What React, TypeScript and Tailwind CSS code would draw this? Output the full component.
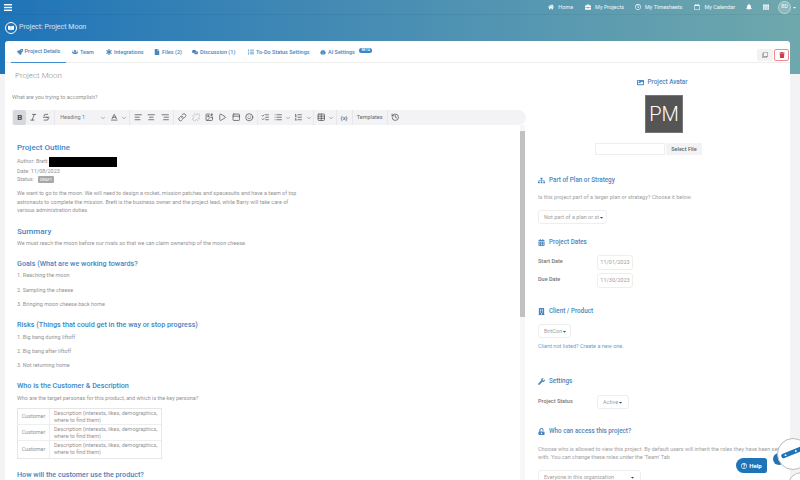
import React from 'react';
import {
  AlignCenter, AlignLeft, AlignRight, Baseline, ChevronDown, History, Italic, Link, List, ListChecks,
  ListOrdered, Play, Smile, Strikethrough, Table, Unlink, ImagePlus, PanelTop,
} from 'lucide-react';
import {
  FaBell, FaBookOpen, FaBriefcase, FaBuilding, FaCalendarAlt, FaCaretDown, FaComments, FaFile, FaImage, FaRegCalendar,
  FaRegClock, FaRegClone, FaRegQuestionCircle, FaHome, FaRobot, FaRocket, FaSitemap, FaStarOfLife, FaTh, FaTrash,
  FaUnlockAlt, FaUsers, FaWrench, FaListUl,
} from 'react-icons/fa';

const navItems = [
  { label: 'Home', icon: FaHome, cls: 'mr-[12px]' },
  { label: 'My Projects', icon: FaBriefcase, cls: 'mr-[11px]' },
  { label: 'My Timesheets', icon: FaRegClock, cls: 'mr-[12px]' },
  { label: 'My Calendar', icon: FaRegCalendar, cls: 'mr-[11px]' },
];

const tabs = [
  { label: 'Project Details', icon: FaRocket, active: true, cls: 'w-[55px] justify-center' },
  { label: 'Team', icon: FaUsers, cls: 'ml-[6px] w-[23px]' },
  { label: 'Integrations', icon: FaStarOfLife, cls: 'ml-[11px] w-[37px]' },
  { label: 'Files (2)', icon: FaFile, cls: 'ml-[11px] w-[27px]' },
  { label: 'Discussion (1)', icon: FaComments, cls: 'ml-[11px] w-[45px]' },
  { label: 'To-Do Status Settings', icon: FaListUl, cls: 'ml-[11px] w-[61px]' },
  { label: 'AI Settings', icon: FaRobot, beta: true, cls: 'ml-[11px] w-[37px]' },
];

const Sep = ({ className = '' }: { className?: string }) => <span className={`h-[15px] w-px shrink-0 bg-[#e6e7ea] ${className}`} />;

const ToolBtn = ({ icon: Icon, active, faded }: { icon: React.ElementType; active?: boolean; faded?: boolean }) => (
  <span className={`flex h-[15px] w-[13.4px] shrink-0 items-center justify-center rounded-[2px] ${active ? 'bg-[#d5d8dc]' : ''}`}>
    <Icon size={8.5} strokeWidth={2} className={faded ? 'text-[#b5b5b5]' : 'text-[#484848]'} />
  </span>
);

const Caret = () => (
  <span className="flex w-[7px] shrink-0 justify-center">
    <ChevronDown size={6} className="text-[#666]" />
  </span>
);

const SelectCaret = () => <FaCaretDown size={5} className="shrink-0 text-[#444]" />;

const SectionTitle = ({ icon: Icon, children, className = '' }: { icon: React.ElementType; children: React.ReactNode; className?: string }) => (
  <div className={`flex items-center gap-[4px] text-[6.3px] font-medium leading-[8px] text-[#4a86bd] ${className}`}>
    <Icon size={7} />
    {children}
  </div>
);

const Heading = ({ children, className = '' }: { children: React.ReactNode; className?: string }) => (
  <h3 className={`text-[7.2px] font-medium leading-[11px] text-[#4186c4] ${className}`}>{children}</h3>
);

const Field = ({ children, className = '' }: { children: React.ReactNode; className?: string }) => (
  <div className={`flex items-center overflow-hidden whitespace-nowrap rounded-[3px] border border-[#eeeeee] bg-white text-[5.5px] text-[#a0a0a0] ${className}`}>
    {children}
  </div>
);

const Label = ({ children }: { children: React.ReactNode }) => (
  <span className="w-[59px] pt-[2px] text-[5.5px] font-medium leading-[8px] text-[#777]">{children}</span>
);

export default function App() {
  return (
    <div className="relative h-[480px] w-[800px] overflow-hidden bg-[#f3f3f5] font-['Roboto',sans-serif] text-[#888]">
      <div className="h-[74px] bg-gradient-to-r from-[#1e74b8] to-[#6fa8ac]">
        <div className="flex h-[15px] items-center justify-between border-b border-black/5 pl-[4px] pr-[3px] text-white">
          <svg width="8" height="7" viewBox="0 0 8 7" className="fill-white">
            <rect width="8" height="1.4" />
            <rect y="2.8" width="8" height="1.4" />
            <rect y="5.6" width="8" height="1.4" />
          </svg>
          <div className="flex items-center text-[5.5px] text-white/90">
            {navItems.map(({ label, icon: Icon, cls }) => (
              <span key={label} className={`flex items-center gap-[4px] ${cls}`}>
                <Icon size={6} className="text-white" />
                {label}
              </span>
            ))}
            <FaBell size={6} className="mr-[11px] text-white" />
            <FaTh size={6} className="mr-[9px] text-white" />
            <span className="flex h-[13px] w-[13px] items-center justify-center rounded-full border border-white/40 bg-white/20 text-[5px]">BD</span>
            <FaCaretDown size={5} className="ml-[1px]" />
          </div>
        </div>
        <div className="flex h-[25px] items-center gap-[2px] pl-[5px] text-[7px] text-white/80">
          <span className="flex h-[12px] w-[12px] items-center justify-center rounded-full border border-white text-white">
            <FaBookOpen size={6} />
          </span>
          Project: Project Moon
        </div>
      </div>

      <div className="relative ml-[5px] -mt-[33px] h-[439px] w-[785px] rounded-t-[3px] bg-white">
        <div className="flex h-[22px] items-start justify-between border-b border-[#eeeeee] pl-[6px] pr-[1px]">
          <div className="flex text-[5.5px] font-medium text-[#4a86bd]">
            {tabs.map(({ label, icon: Icon, active, beta, cls }) => (
              <span key={label} className={`relative flex h-[22px] items-center gap-[2px] whitespace-nowrap ${cls} ${active ? 'border-b border-[#3f8fd0]' : ''}`}>
                <Icon size={6} className="shrink-0" />
                {label}
                {beta && <span className="absolute -right-[15px] top-[7px] rounded-[3px] bg-[#2f86cc] px-[2px] text-[3.5px] leading-[5px] text-white">BETA</span>}
              </span>
            ))}
          </div>
          <div className="mt-[8px] flex items-center gap-[1px]">
            <span className="flex h-[12px] w-[16px] items-center justify-center rounded-[2px] bg-[#f2f2f2]"><FaRegClone size={6} className="text-[#888]" /></span>
            <span className="flex h-[12px] w-[15px] items-center justify-center rounded-[2px] border border-[#f08a90]"><FaTrash size={6} className="text-[#c9404d]" /></span>
          </div>
        </div>

        <div className="flex">
          <div className="w-[520px] pl-[7px]">
            <div className="mt-[7px] pl-[3px] text-[8px] font-light leading-[12px] text-[#8f8f8f]">Project Moon</div>
            <p className="mt-[11px] text-[5.5px] leading-[8px] text-[#939393]">What are you trying to accomplish?</p>
            <div className="mt-[9px] flex h-[15px] w-[514px] items-center rounded-r-[8px] bg-[#f3f3f5] pl-[1px]">
              <span className="flex h-[15px] w-[13.4px] shrink-0 items-center justify-center rounded-[2px] bg-[#d5d8dc] text-[8px] font-bold text-[#484848]">B</span>
              <ToolBtn icon={Italic} />
              <ToolBtn icon={Strikethrough} />
              <Sep className="ml-[1px]" />
              <span className="flex w-[52px] shrink-0 items-center justify-between pl-[5px] pr-[1px] text-[5.5px] text-[#777]">Heading 1<Caret /></span>
              <ToolBtn icon={Baseline} />
              <Caret />
              <Sep className="ml-[1px]" />
              <span className="w-[2px] shrink-0" />
              <ToolBtn icon={AlignLeft} />
              <ToolBtn icon={AlignCenter} />
              <ToolBtn icon={AlignRight} />
              <Sep className="ml-[1px]" />
              <span className="w-[2px] shrink-0" />
              <ToolBtn icon={Link} />
              <ToolBtn icon={Unlink} faded />
              <ToolBtn icon={ImagePlus} />
              <ToolBtn icon={Play} />
              <ToolBtn icon={PanelTop} />
              <ToolBtn icon={Smile} />
              <Sep className="ml-[1px]" />
              <ToolBtn icon={ListChecks} />
              <ToolBtn icon={List} />
              <Caret />
              <ToolBtn icon={ListOrdered} />
              <Caret />
              <Sep className="ml-[1px]" />
              <ToolBtn icon={Table} />
              <Caret />
              <Sep className="ml-[1px]" />
              <span className="w-[15px] shrink-0 text-center text-[6px] text-[#555]">{'{x}'}</span>
              <Sep />
              <span className="w-[34px] shrink-0 text-center text-[5.5px] text-[#666]">Templates</span>
              <Sep className="mr-[1px]" />
              <ToolBtn icon={History} />
            </div>

            <div className="flex h-[355px] w-[513px] overflow-hidden">
              <div className="min-w-0 flex-1 pl-[5px] pt-[16.5px] text-[5.45px] leading-[8.5px] text-[#939393]">
                <Heading className="!text-[8px] mb-[4px]">Project Outline</Heading>
                <div className="flex items-center">Author: Brett&nbsp;<span className="h-[10px] w-[68px] bg-black" /></div>
                <div>Date: 11/08/2023</div>
                <div className="flex items-center">Status: <span className="ml-[4px] rounded-[1px] bg-[#a8a8a8] px-[2px] text-[4px] leading-[7px] text-white">DRAFT</span></div>
                <p className="mt-[5.5px]">
                  We want to go to the moon. We will need to design a rocket, mission patches and spacesuits and have a team of top<br />
                  astronauts to complete the mission. Brett is the business owner and the project lead, while Barry will take care of<br />
                  various administration duties.
                </p>
                <Heading className="!text-[8px] mt-[11px]">Summary</Heading>
                <p className="mt-[2px]">We must reach the moon before our rivals so that we can claim ownership of the moon cheese.</p>
                <Heading className="mt-[11px]">Goals (What are we working towards?</Heading>
                <p className="mt-[2px]">1. Reaching the moon</p>
                <p className="mt-[6px]">2. Sampling the cheese</p>
                <p className="mt-[5.5px]">3. Bringing moon cheese back home</p>
                <Heading className="mt-[11px]">Risks (Things that could get in the way or stop progress)</Heading>
                <p className="mt-[3px]">1. Big bang during liftoff</p>
                <p className="mt-[5.5px]">2. Big bang after liftoff</p>
                <p className="mt-[5.5px]">3. Not returning home</p>
                <Heading className="mt-[10px]">Who is the Customer &amp; Description</Heading>
                <p className="mt-[3px]">Who are the target personas for this product, and which is the key persona?</p>
                <div className="mt-[6px] w-[145px] border border-[#e6e6e6]">
                  {[0, 1, 2].map((i) => (
                    <div key={i} className="flex h-[16.2px] items-center border-b border-[#eee] leading-[7px] last:border-b-0">
                      <span className="flex h-full w-[32px] items-center justify-center border-r border-[#eee]">Customer</span>
                      <span className="pl-[4px]">Description (interests, likes, demographics,<br />where to find them)</span>
                    </div>
                  ))}
                </div>
                <Heading className="mt-[10.5px]">How will the customer use the product?</Heading>
              </div>
              <div className="w-[5px] bg-[#f7f7f7]">
                <div className="mt-[6px] h-[186px] bg-[#c1c1c1]" />
              </div>
            </div>
          </div>

          <div className="h-[417px] w-[265px] overflow-hidden pl-[13px]">
            <div className="flex flex-col items-center">
              <SectionTitle icon={FaImage} className="mt-[15px] mr-[4px]">Project Avatar</SectionTitle>
              <div className="mt-[9px] flex h-[38px] w-[38px] items-center justify-center border border-[#777] bg-[#555] text-[20px] font-light leading-none text-white">PM</div>
              <div className="mt-[10px] flex items-center gap-[1px] self-start pl-[57px]">
                <div className="h-[12px] w-[70px] border border-[#eee] bg-white" />
                <span className="flex h-[12px] w-[36px] items-center justify-center bg-[#f3f3f5] text-[5.5px] font-medium text-[#666]">Select File</span>
              </div>
            </div>
            <SectionTitle icon={FaSitemap} className="mt-[21px]">Part of Plan or Strategy</SectionTitle>
            <p className="mt-[9px] text-[5.5px] leading-[8px] text-[#a0a0a0]">Is this project part of a larger plan or strategy? Choose it below.</p>
            <Field className="mt-[9px] h-[14px] w-[69px] justify-between px-[5px]">Not part of a plan or st<SelectCaret /></Field>
            <SectionTitle icon={FaCalendarAlt} className="mt-[14px]">Project Dates</SectionTitle>
            <div className="mt-[9px] flex items-start">
              <Label>Start Date</Label>
              <Field className="h-[15px] w-[36px] justify-center">11/01/2023</Field>
            </div>
            <div className="mt-[3px] flex items-start">
              <Label>Due Date</Label>
              <Field className="h-[15px] w-[36px] justify-center">11/30/2023</Field>
            </div>
            <SectionTitle icon={FaBuilding} className="mt-[19px]">Client / Product</SectionTitle>
            <Field className="mt-[9px] h-[14px] w-[33px] justify-between px-[5px]">BritCon<SelectCaret /></Field>
            <p className="mt-[4px] text-[5.5px] leading-[8px] text-[#6a9fd0]">Client not listed? Create a new one.</p>
            <SectionTitle icon={FaWrench} className="mt-[27px]">Settings</SectionTitle>
            <div className="mt-[10px] flex items-start">
              <Label>Project Status</Label>
              <Field className="h-[14px] w-[32px] justify-between px-[5px]">Active<SelectCaret /></Field>
            </div>
            <SectionTitle icon={FaUnlockAlt} className="mt-[18px]">Who can access this project?</SectionTitle>
            <p className="mt-[9.75px] text-[5.5px] leading-[8.5px] text-[#a0a0a0]">
              Choose who is allowed to view this project. By default users will inherit the roles they have been set<br />
              with. You can change these roles under the 'Team' Tab
            </p>
            <Field className="mt-[8.25px] h-[14px] w-[103px] justify-between px-[5px]">Everyone in this organization<SelectCaret /></Field>
          </div>
        </div>
      </div>

      <div className="absolute left-[736px] top-[458px] flex h-[15px] w-[31px] items-center justify-center gap-[2px] rounded-l-[8px] rounded-r-[3px] bg-[#1f73b7] text-[6px] font-bold text-white">
        <FaRegQuestionCircle size={6} />Help
      </div>
      <div className="absolute left-[773px] top-[453px] h-[12px] w-[12px] rounded-full bg-[#1f73b7]" />
      <div className="absolute left-[777px] top-[438px] flex h-[32px] w-[32px] items-center rounded-full border border-[#bbb] bg-white">
        <svg width="32" height="32" viewBox="0 0 32 32">
          <path d="M6 18 L26 10" stroke="#1f73b7" strokeWidth="5" strokeLinecap="round" />
          <circle cx="8" cy="17.2" r="1" fill="white" />
          <circle cx="19" cy="12.8" r="1" fill="white" />
        </svg>
      </div>
      <div className="absolute left-[787px] top-[472px] h-[30px] w-[30px] rounded-full border border-[#bbb] bg-white" />
    </div>
  );
}
